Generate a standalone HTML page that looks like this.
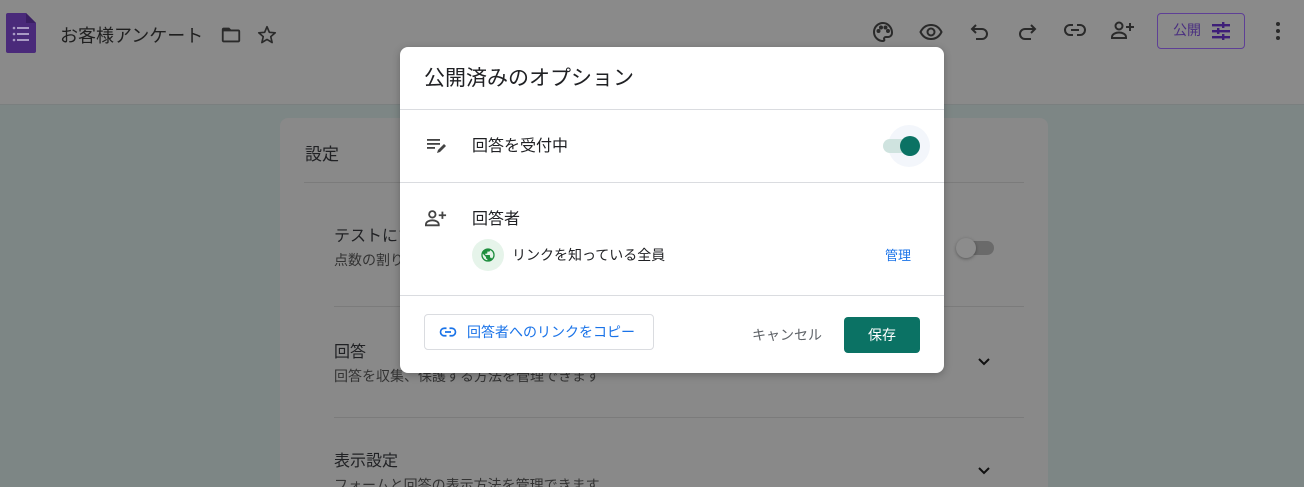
<!DOCTYPE html>
<html style="width:1304px;height:487px;overflow:hidden"><head><meta charset="utf-8"><style>
*{margin:0;padding:0;box-sizing:border-box}
html,body{width:1304px;height:487px;overflow:hidden}
body{position:relative;background:#7d8685;font-family:"Liberation Sans","Noto Sans CJK JP",sans-serif;color:#202124}
.top{position:absolute;left:0;top:0;width:1304px;height:105px;background:#8a8a8a;border-bottom:1px solid #7a7f7f}
.abs{position:absolute}
.card{position:absolute;left:280px;top:118px;width:768px;height:369px;background:#898989;border-radius:8px 8px 0 0}
.hr{position:absolute;height:1px;background:#7b7b7b}
.t{position:absolute;white-space:nowrap;line-height:1.4}
.dlg{position:absolute;left:400px;top:47px;width:544px;height:326px;background:#fff;border-radius:8px;box-shadow:0 2px 8px rgba(0,0,0,.25)}
.dl{position:absolute;left:0;width:544px;height:1px;background:#dadce0}
</style></head><body>
<div class="top"></div>
<svg class="abs" style="left:6px;top:13px" width="30" height="40" viewBox="0 0 30 40"><path d="M2 0h18l10 10v28a2 2 0 0 1-2 2H2a2 2 0 0 1-2-2V2a2 2 0 0 1 2-2z" fill="#4a2a7a"/><path d="M20 0l10 10h-10z" fill="#3a1f63"/><g fill="#a99ac4"><circle cx="8" cy="15" r="1.3"/><circle cx="8" cy="21" r="1.3"/><circle cx="8" cy="27" r="1.3"/><rect x="11" y="14" width="12" height="2"/><rect x="11" y="20" width="12" height="2"/><rect x="11" y="26" width="12" height="2"/></g></svg>
<div class="t" style="left:60px;top:24px;font-size:18px;color:#1f1f1f">お客様アンケート</div>
<svg class="abs" style="left:220px;top:24px" width="22" height="22" viewBox="0 0 24 24"><path d="M10 4H4c-1.1 0-2 .9-2 2v12c0 1.1.9 2 2 2h16c1.1 0 2-.9 2-2V8c0-1.1-.9-2-2-2h-8l-2-2zm10 14H4V8h16v10z" fill="#2a2a2a"/></svg>
<svg class="abs" style="left:256px;top:24px" width="22" height="22" viewBox="0 0 24 24"><path d="M12 3l2.6 6.1 6.4.5-4.9 4.2 1.5 6.4L12 16.8 6.4 20.2l1.5-6.4L3 9.6l6.4-.5z" fill="none" stroke="#2a2a2a" stroke-width="1.8" stroke-linejoin="round"/></svg>
<svg class="abs" style="left:871px;top:20px" width="24" height="24" viewBox="0 0 24 24" fill="none" stroke="#2a2a2a" stroke-width="2"><path d="M12 3a9 9 0 0 0 0 18c1.2 0 1.6-.8 1.2-1.6-.5-1 .2-2.4 1.5-2.4H17a4 4 0 0 0 4-4c0-5.5-4-10-9-10z"/><circle cx="7.5" cy="11" r="1" fill="#2a2a2a"/><circle cx="10" cy="7.5" r="1" fill="#2a2a2a"/><circle cx="14.5" cy="7.5" r="1" fill="#2a2a2a"/><circle cx="17" cy="11" r="1" fill="#2a2a2a"/></svg>
<svg class="abs" style="left:919px;top:20px" width="24" height="24" viewBox="0 0 24 24" fill="none" stroke="#2a2a2a" stroke-width="2"><path d="M1.5 12C4 7 8 5 12 5s8 2 10.5 7C20 17 16 19 12 19s-8-2-10.5-7z"/><circle cx="12" cy="12" r="3.5"/></svg>
<svg class="abs" style="left:968px;top:20px" width="24" height="24" viewBox="0 0 24 24" fill="none" stroke="#2a2a2a" stroke-width="2"><path d="M8 5L4 9l4 4"/><path d="M4 9h10a5 5 0 0 1 0 10h-6"/></svg>
<svg class="abs" style="left:1015px;top:20px" width="24" height="24" viewBox="0 0 24 24" fill="none" stroke="#2a2a2a" stroke-width="2"><path d="M16 5l4 4-4 4"/><path d="M20 9H10a5 5 0 0 0 0 10h6"/></svg>
<svg class="abs" style="left:1063px;top:18px" width="24" height="24" viewBox="0 0 24 24" fill="none" stroke="#2a2a2a" stroke-width="2"><path d="M10 7H7a5 5 0 0 0 0 10h3M14 7h3a5 5 0 0 1 0 10h-3M8 12h8"/></svg>
<svg class="abs" style="left:1110px;top:18px" width="26" height="24" viewBox="0 0 26 24" fill="none" stroke="#2a2a2a" stroke-width="2"><circle cx="9" cy="8" r="3.5"/><path d="M2 20v-1c0-3 4-4.5 7-4.5s7 1.5 7 4.5v1z"/><path d="M20 5v8M16 9h8"/></svg>
<div class="abs" style="left:1157px;top:13px;width:88px;height:36px;border:1px solid #5e3f96;border-radius:4px"></div>
<div class="t" style="left:1173px;top:21px;font-size:14px;color:#4a2f80">公開</div>
<svg class="abs" style="left:1210px;top:21px" width="22" height="20" viewBox="0 0 22 20" fill="#3e1f78"><rect x="2" y="3" width="18" height="2.4"/><rect x="12" y="1" width="2.4" height="6"/><rect x="2" y="9" width="18" height="2.4"/><rect x="7" y="7" width="2.4" height="6"/><rect x="2" y="15" width="18" height="2.4"/><rect x="12" y="13" width="2.4" height="6"/></svg>
<svg class="abs" style="left:1274px;top:21px" width="8" height="20"><circle cx="4" cy="3" r="2" fill="#2a2a2a"/><circle cx="4" cy="10" r="2" fill="#2a2a2a"/><circle cx="4" cy="17" r="2" fill="#2a2a2a"/></svg>

<div class="card"></div>
<div class="t" style="left:305px;top:143px;font-size:17px">設定</div>
<div class="hr" style="left:304px;top:182px;width:720px"></div>
<div class="t" style="left:334px;top:226px;font-size:16px">テストにする</div>
<div class="t" style="left:334px;top:251px;font-size:14px;color:#333">点数の割り当て</div>
<div class="abs" style="left:958px;top:241px;width:36px;height:14px;border-radius:7px;background:#6a6a6a"></div>
<div class="abs" style="left:956px;top:238px;width:20px;height:20px;border-radius:50%;background:#8c8c8c;box-shadow:0 1px 3px rgba(0,0,0,.35)"></div>
<div class="hr" style="left:334px;top:306px;width:690px"></div>
<div class="t" style="left:334px;top:342px;font-size:16px">回答</div>
<div class="t" style="left:334px;top:367px;font-size:14px;color:#333">回答を収集、保護する方法を管理できます</div>
<svg class="abs" style="left:976px;top:355px" width="16" height="14" viewBox="0 0 16 14"><path d="M3 4l5 5 5-5" fill="none" stroke="#111" stroke-width="2"/></svg>
<div class="hr" style="left:334px;top:417px;width:690px"></div>
<div class="t" style="left:334px;top:451px;font-size:16px">表示設定</div>
<div class="t" style="left:334px;top:476px;font-size:14px;color:#333">フォームと回答の表示方法を管理できます</div>
<svg class="abs" style="left:976px;top:464px" width="16" height="14" viewBox="0 0 16 14"><path d="M3 4l5 5 5-5" fill="none" stroke="#111" stroke-width="2"/></svg>

<div class="dlg">
<div class="t" style="left:24px;top:17px;font-size:21px;color:#202124">公開済みのオプション</div>
<div class="dl" style="top:62px"></div>
<svg class="abs" style="left:26px;top:89px" width="22" height="20" viewBox="0 0 22 20" fill="#444"><rect x="1" y="3" width="13" height="1.8"/><rect x="1" y="7" width="13" height="1.8"/><rect x="1" y="11" width="8" height="1.8"/><path d="M11 17l1-3 6-6 2 2-6 6z"/></svg>
<div class="t" style="left:72px;top:89px;font-size:16px">回答を受付中</div>
<div class="abs" style="left:488px;top:78px;width:42px;height:42px;border-radius:50%;background:#f3f6fb"></div>
<div class="abs" style="left:483px;top:92px;width:34px;height:14px;border-radius:7px;background:#cfe3df"></div>
<div class="abs" style="left:500px;top:89px;width:20px;height:20px;border-radius:50%;background:#0b7264"></div>
<div class="dl" style="top:135px"></div>
<svg class="abs" style="left:24px;top:160px" width="24" height="22" viewBox="0 0 26 24" fill="none" stroke="#444" stroke-width="2"><circle cx="9" cy="8" r="3.5"/><path d="M2 20v-1c0-3 4-4.5 7-4.5s7 1.5 7 4.5v1z"/><path d="M20 5v8M16 9h8"/></svg>
<div class="t" style="left:72px;top:162px;font-size:16px">回答者</div>
<div class="abs" style="left:72px;top:192px;width:32px;height:32px;border-radius:50%;background:#e6f4ea"></div>
<svg class="abs" style="left:80px;top:200px" width="16" height="16" viewBox="0 0 24 24"><path d="M12 2a10 10 0 1 0 0 20 10 10 0 0 0 0-20zm-1 17.9A8 8 0 0 1 4.2 10L9 15v1a2 2 0 0 0 2 2zm6.9-2.5A2 2 0 0 0 16 16h-1v-3a1 1 0 0 0-1-1H8v-2h2a1 1 0 0 0 1-1V7h2a2 2 0 0 0 2-2v-.4a8 8 0 0 1 2.9 12.8z" fill="#1e8e3e"/></svg>
<div class="t" style="left:112px;top:199px;font-size:14px">リンクを知っている全員</div>
<div class="t" style="left:485px;top:200px;font-size:13px;color:#1a73e8">管理</div>
<div class="dl" style="top:248px"></div>
<div class="abs" style="left:24px;top:267px;width:230px;height:36px;border:1px solid #dadce0;border-radius:4px"></div>
<svg class="abs" style="left:39px;top:276px" width="18" height="18" viewBox="0 0 24 24" fill="none" stroke="#1a73e8" stroke-width="2.2"><path d="M10 7H7a5 5 0 0 0 0 10h3M14 7h3a5 5 0 0 1 0 10h-3M8 12h8"/></svg>
<div class="t" style="left:67px;top:276px;font-size:14px;color:#1a73e8">回答者へのリンクをコピー</div>
<div class="t" style="left:352px;top:279px;font-size:14px;color:#5f6368">キャンセル</div>
<div class="abs" style="left:444px;top:270px;width:76px;height:36px;border-radius:4px;background:#0b7264"></div>
<div class="t" style="left:468px;top:279px;font-size:14px;color:#fff">保存</div>
</div>
</body></html>
